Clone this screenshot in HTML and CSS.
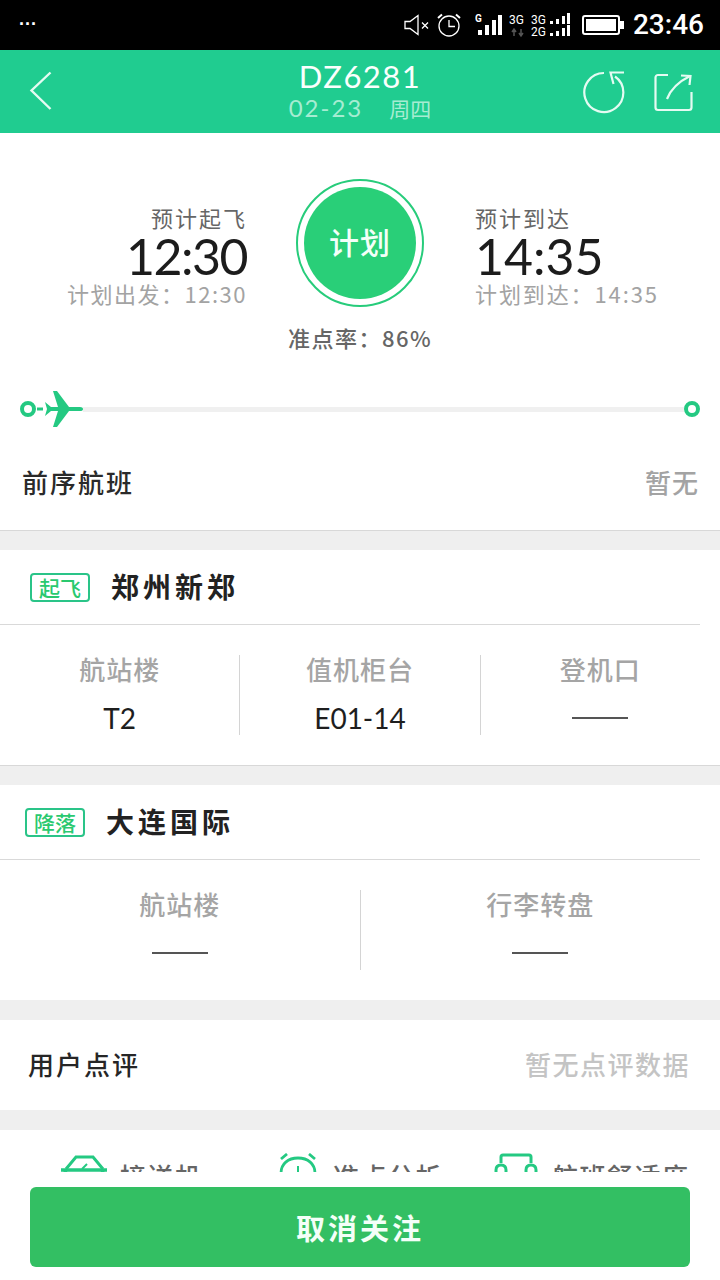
FILE: index.html
```html
<!DOCTYPE html>
<html lang="zh">
<head>
<meta charset="utf-8">
<title>DZ6281</title>
<link rel="stylesheet" href="styles.css">
</head>
<body>
<div class="page">
  <div class="status">
    <span class="dots">···</span>
    <div class="status-right">
      <svg class="ic-mute" width="28" height="24" viewBox="0 0 28 24" fill="none" stroke="#fff" stroke-width="1.3"><path d="M1 8.5h5L14 2.500v19L6 15.500H1z"/><path d="M18 9.500l6 6M24 9.500l-6 6"/></svg>
      <svg class="ic-alarm" width="24" height="24" viewBox="0 0 24 24" fill="none" stroke="#fff" stroke-width="1.300"><circle cx="12" cy="13" r="10"/><path d="M12 7v6.500h6"/><path d="M1 5l4-3.500M23 5l-4-3.500" stroke-width="2"/></svg>
      <svg class="ic-signal" width="28" height="24" viewBox="0 0 28 24"><text x="0" y="9" class="sig-label">G</text><rect x="3" y="17" width="4" height="5" fill="#fff"/><rect x="10" y="12" width="4" height="10" fill="#fff"/><rect x="17" y="7" width="4" height="15" fill="#fff"/><rect x="23" y="2" width="4" height="20" fill="#fff"/></svg>
      <svg class="ic-net" width="62" height="26" viewBox="0 0 62 26">
        <text x="0" y="12" class="net-label">3G</text>
        <text x="22" y="12" class="net-label">3G</text>
        <text x="22" y="24" class="net-label">2G</text>
        <path d="M5 24v-6M3 20l2-3 2 3M12 17v6M10 21l2 3 2-3" stroke="#555" stroke-width="1.500" fill="none"/>
        <g fill="#fff">
          <rect x="41" y="9" width="3" height="3"/><rect x="47" y="7" width="3" height="5"/><rect x="53" y="4" width="3" height="8"/><rect x="58" y="1" width="3" height="11"/>
          <rect x="41" y="21" width="3" height="3"/><rect x="47" y="19" width="3" height="5"/><rect x="53" y="16" width="3" height="8"/><rect x="58" y="13" width="3" height="11"/>
        </g>
      </svg>
      <svg class="ic-batt" width="42" height="20" viewBox="0 0 42 20"><rect x="1" y="1" width="36" height="18" rx="2" fill="none" stroke="#fff" stroke-width="2"/><rect x="4" y="4" width="30" height="12" fill="#fff"/><rect x="38" y="6" width="4" height="8" fill="#fff"/></svg>
      <span class="clock">23:46</span>
    </div>
  </div>

  <header class="topbar">
    <svg class="ic-back" width="24" height="40" viewBox="0 0 24 40" fill="none" stroke="#e4fbf2" stroke-width="2.400"><path d="M21.500 1.500L2.500 19.500 21.500 38"/></svg>
    <div class="title">
      <div class="flight-no">DZ6281</div>
      <div class="flight-date"><span class="date-num">02-23</span><span>周四</span></div>
    </div>
    <div class="top-actions">
      <svg width="44" height="44" viewBox="0 0 44 44" fill="none" stroke="#e4fbf2" stroke-width="2.200"><path d="M33 6.500A19.500 19.500 0 1 1 22 3"/><path d="M42 2.500H28.500L31.500 14"/></svg>
      <svg width="40" height="40" viewBox="0 0 40 40" fill="none" stroke="#e4fbf2" stroke-width="2.200"><path d="M14 3H4a2.500 2.500 0 0 0-2.500 2.500v30A2.500 2.500 0 0 0 4 38h31a2.500 2.500 0 0 0 2.500-2.500V20"/><path d="M13 27C16 19 24 10 36 4"/><path d="M27 3.500l9.500 0.500-1 9"/></svg>
    </div>
  </header>

  <section class="summary">
    <div class="times">
      <div class="time-col time-left">
        <div class="time-label">预计起飞</div>
        <div class="time-big">12:30</div>
        <div class="time-sub">计划出发：12:30</div>
      </div>
      <div class="status-ring"><div class="status-disc">计划</div></div>
      <div class="time-col time-right">
        <div class="time-label">预计到达</div>
        <div class="time-big">14:35</div>
        <div class="time-sub">计划到达：14:35</div>
      </div>
    </div>
    <div class="ontime">准点率：86%</div>
    <div class="track">
      <span class="node"></span>
      <svg class="plane" width="46" height="38" viewBox="0 0 46 38" fill="#24c982"><path d="M0 17.500h6v3H0z"/><path d="M8 12l6 5h7L16 1h4l12 16h11q3 0 3 2t-3 2H32L20 37h-4l5-16h-7l-6 5 2-7z"/></svg>
      <span class="track-line"></span>
      <span class="node"></span>
    </div>
    <div class="prev-row">
      <span class="prev-title">前序航班</span>
      <span class="prev-value">暂无</span>
    </div>
  </section>

  <section class="card card-dep">
    <div class="place place-dep">
      <span class="tag">起飞</span><span class="place-name">郑州新郑</span>
    </div>
    <div class="info-row">
      <div class="info"><div class="info-label">航站楼</div><div class="info-value">T2</div></div>
      <div class="info"><div class="info-label">值机柜台</div><div class="info-value">E01-14</div></div>
      <div class="info"><div class="info-label">登机口</div><div class="info-value"><span class="dash"></span></div></div>
    </div>
  </section>

  <section class="card card-arr">
    <div class="place place-arr">
      <span class="tag">降落</span><span class="place-name">大连国际</span>
    </div>
    <div class="info-row">
      <div class="info"><div class="info-label">航站楼</div><div class="info-value"><span class="dash"></span></div></div>
      <div class="info"><div class="info-label">行李转盘</div><div class="info-value"><span class="dash"></span></div></div>
    </div>
  </section>

  <section class="review">
    <span class="review-title">用户点评</span>
    <span class="review-value">暂无点评数据</span>
  </section>

  <section class="tools">
    <div class="tool tool-1">
      <svg width="48" height="26" viewBox="0 0 48 26" fill="none" stroke="#24c982" stroke-width="3.500"><path d="M1 15h46"/><path d="M6 14L16 2h17l10 12" stroke-width="3"/><path d="M22 14l5-5" stroke-width="2"/><path d="M5 15l1 4M43 15l-1 4"/></svg>
      <span>接送机</span>
    </div>
    <div class="tool tool-2">
      <svg width="40" height="30" viewBox="0 0 40 30" fill="none" stroke="#24c982" stroke-width="2.800"><path d="M3 20C3 11 10 5 20 5s17 6 17 15"/><path d="M3 6l6-5M37 6l-6-5"/><path d="M20 13v8" stroke-width="2"/></svg>
      <span>准点分析</span>
    </div>
    <div class="tool tool-3">
      <svg width="44" height="30" viewBox="0 0 44 30" fill="none" stroke="#24c982" stroke-width="3"><path d="M7 10V4q0-2 2-2h26q2 0 2 2v6"/><path d="M2 22v-5q0-5 5-5t5 5v5M32 22v-5q0-5 5-5t5 5v5"/></svg>
      <span>航班舒适度</span>
    </div>
  </section>

  <div class="footer">
    <button class="cancel" type="button">取消关注</button>
  </div>
</div>
</body>
</html>
```
FILE: styles.css
```css
* { box-sizing: border-box; }
html, body { margin: 0; padding: 0; }
body {
  width: 720px;
  height: 1280px;
  overflow: hidden;
  background: #efefef;
  font-family: "Noto Sans CJK SC", "Noto Sans", sans-serif;
}
.page { position: relative; width: 720px; height: 1280px; overflow: hidden; }

.status {
  height: 50px;
  background: #000;
  color: #fff;
  display: flex;
  align-items: center;
  justify-content: space-between;
  padding: 0 16px 0 19px;
}
.dots { font: 700 18px/1 "Liberation Sans", sans-serif; margin-bottom: 2px; }
.status-right { display: flex; align-items: center; }
.ic-mute { margin-right: 5px; }
.ic-alarm { margin-right: 14px; }
.ic-signal { margin-right: 6px; }
.ic-net { margin-right: 11px; }
.ic-batt { margin-right: 9px; }
.sig-label { font: 700 10px "Roboto", sans-serif; fill: #fff; }
.net-label { font: 400 12px "Roboto", sans-serif; fill: #fff; }
.clock { font: 500 28px/1 "Roboto", sans-serif; }

.topbar {
  height: 83px;
  background: #20cc90;
  color: #fff;
  position: relative;
  display: flex;
  align-items: center;
  justify-content: space-between;
  padding: 0 26px 0 29px;
}
.ic-back { margin-top: -1px; }
.title { position: absolute; left: 0; right: 0; top: 7px; text-align: center; }
.flight-no { font: 400 31px/38px "Lato", sans-serif; letter-spacing: 1.500px; color: #fbfffd; }
.flight-date {
  display: flex;
  justify-content: center;
  align-items: baseline;
  gap: 26px;
  font: 400 21px/28px "Noto Sans CJK SC", sans-serif;
  color: #a6ecd2;
  margin-top: -1px;
}
.date-num { font: 400 24px/28px "Lato", sans-serif; letter-spacing: 2px; }
.top-actions { display: flex; align-items: center; gap: 28px; position: relative; }

.summary {
  height: 398px;
  background: #fff;
  border-bottom: 1px solid #d8d8d8;
  display: flex;
  flex-direction: column;
}
.times {
  display: grid;
  grid-template-columns: 247px 177px 1fr;
  margin-top: 46px;
}
.time-col { padding-top: 26px; }
.time-left { text-align: right; }
.time-right { text-align: left; padding-left: 51px; }
.time-label { font-size: 22px; line-height: 24px; color: #666; letter-spacing: 2px; }
.time-big { font: 400 50px/42px "Lato", sans-serif; color: #1c1c1c; letter-spacing: -1.500px; margin-top: 6px; }
.time-right .time-big { letter-spacing: 0; }
.time-sub { font-size: 22px; line-height: 26px; color: #a3a3a3; white-space: nowrap; letter-spacing: 1.500px; margin-top: 3px; }
.time-right .time-sub { letter-spacing: 1.900px; }
.status-ring {
  width: 128px;
  height: 128px;
  margin-left: 49px;
  border: 2px solid #27cc7b;
  border-radius: 50%;
  padding: 6px;
  background: #fff;
}
.status-disc {
  width: 100%;
  height: 100%;
  border-radius: 50%;
  background: #29cf78;
  color: #f3fff9;
  font-size: 30px;
  font-weight: 500;
  letter-spacing: 1px;
  padding-bottom: 4px;
  display: flex;
  align-items: center;
  justify-content: center;
}
.ontime {
  text-align: center;
  font-size: 22px;
  line-height: 30px;
  font-weight: 500;
  color: #666;
  letter-spacing: 1.500px;
  margin-top: 15px;
}
.track {
  display: flex;
  align-items: center;
  height: 40px;
  margin-top: 37px;
  padding: 0 20px;
}
.node {
  width: 16px;
  height: 16px;
  border: 4px solid #24c982;
  border-radius: 50%;
  flex: none;
  background: #fff;
}
.plane { flex: none; margin-left: 1px; }
.track-line { flex: 1; height: 5px; background: #f0f0f0; }
.prev-row {
  display: flex;
  justify-content: space-between;
  align-items: center;
  padding: 0 21px 0 22px;
  margin-top: 36px;
  height: 32px;
}
.prev-title { font-size: 26px; font-weight: 500; color: #2a2a2a; letter-spacing: 2px; }
.prev-value { font-size: 26px; font-weight: 500; color: #a3a3a3; letter-spacing: 1px; }

.card { background: #fff; margin-top: 19px; }
.card-dep { height: 216px; border-bottom: 1px solid #d8d8d8; }
.card-arr { height: 215px; }
.place {
  height: 75px;
  display: flex;
  align-items: center;
  border-bottom: 1px solid #d9d9d9;
  margin-right: 20px;
}
.place-dep { padding-left: 30px; gap: 21px; }
.place-arr { padding-left: 25px; gap: 21px; }
.tag {
  width: 60px;
  height: 29px;
  border: 2px solid #2ac488;
  border-radius: 4px;
  color: #2ac96f;
  font-size: 21px;
  line-height: 25px;
  font-weight: 500;
  text-align: center;
}
.place-name { font-size: 28px; font-weight: 700; color: #222; letter-spacing: 4px; margin-bottom: 3px; }
.info-row { display: flex; padding-top: 30px; }
.info {
  flex: 1;
  height: 80px;
  text-align: center;
  border-left: 1px solid #d4d4d4;
}
.info:first-child { border-left: 0; }
.info-label { font-size: 26px; line-height: 32px; font-weight: 500; color: #a5a5a5; letter-spacing: 1px; margin-top: -2px; }
.info-value {
  height: 36px;
  margin-top: 15px;
  font: 400 28px/36px "Lato", sans-serif;
  color: #1e1e1e;
  display: flex;
  align-items: center;
  justify-content: center;
}
.dash { width: 56px; height: 2px; background: #555; }

.review {
  height: 90px;
  margin-top: 20px;
  background: #fff;
  display: flex;
  align-items: center;
  justify-content: space-between;
  padding: 0 30px 4px 28px;
}
.review-title { font-size: 26px; font-weight: 500; color: #262626; letter-spacing: 2px; }
.review-value { font-size: 26px; font-weight: 500; color: #c4c4c4; letter-spacing: 1.500px; }

.tools {
  height: 150px;
  margin-top: 20px;
  background: #fff;
  display: grid;
  grid-template-columns: 218px 218px 1fr;
  padding: 25px 0 0 60px;
}
.tool { display: flex; align-items: flex-start; gap: 12px; }
.tool span { font-size: 26px; line-height: 36px; font-weight: 500; color: #666; letter-spacing: 1.500px; margin-top: 3px; white-space: nowrap; }
.tool-2 { gap: 15px; }
.tool-2 svg { margin-top: -2px; }
.tool-3 svg { margin: -2px 2px 0 -2px; }

.footer {
  position: absolute;
  left: 0;
  right: 0;
  top: 1172px;
  height: 108px;
  background: #fff;
  padding: 15px 30px 0;
}
.cancel {
  display: block;
  width: 660px;
  height: 80px;
  border: 0;
  border-radius: 6px;
  background: #33bf63;
  color: #f4fff8;
  font-family: inherit;
  font-size: 29px;
  font-weight: 700;
  letter-spacing: 3px;
}
```
